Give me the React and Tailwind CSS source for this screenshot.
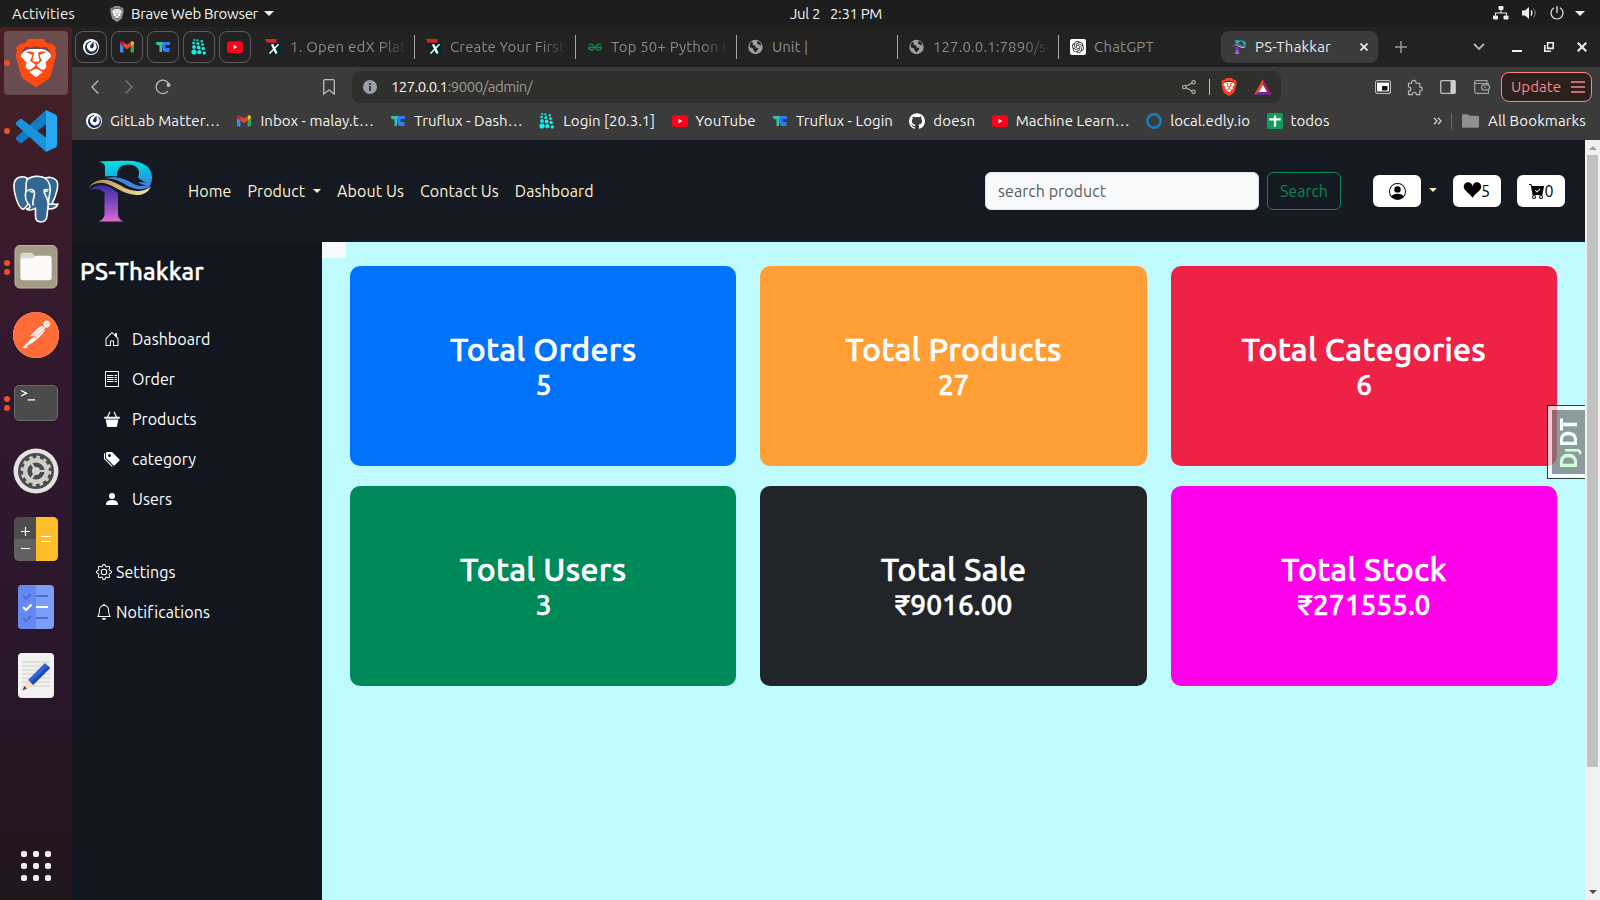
import React, { useLayoutEffect, useRef } from "react";
import {
  BsHouseDoor, BsTagsFill, BsPersonFill, BsGear, BsBell,
  BsPersonCircle, BsSuitHeartFill, BsCartCheckFill,
} from "react-icons/bs";
import { SiBrave, SiPostman, SiMattermost, SiGithub, SiOpenai } from "react-icons/si";

/* Text set to a given advance width by adjusting its letter spacing. */
function T({ w, className = "", children }) {
  const ref = useRef(null);
  useLayoutEffect(() => {
    const el = ref.current;
    el.style.letterSpacing = "0px";
    el.style.width = "auto";
    const natural = el.getBoundingClientRect().width;
    el.style.letterSpacing = (w - natural) / el.textContent.length + "px";
    el.style.width = w + "px";
  }, [w]);
  return (
    <span ref={ref} className={"inline-block shrink-0 whitespace-pre " + className}>
      {children}
    </span>
  );
}

/* ---------- favicons ---------- */
const Mattermost = () => (
  <span className="flex size-4 shrink-0 items-center justify-center rounded-full bg-white">
    <SiMattermost className="size-[13px] text-[#1b2f55]" />
  </span>
);
const Gmail = () => (
  <svg viewBox="0 0 16 16" className="size-4 shrink-0">
    <path d="M1 4v8.500c0 .6.4 1 1 1h2.400V7z" fill="#4285f4" />
    <path d="M15 4v8.500c0 .6-.4 1-1 1h-2.400V7z" fill="#34a853" />
    <path d="M11.600 3.300V7.500L15 5V4c0-1.500-1.700-2.300-2.900-1.400z" fill="#fbbc04" />
    <path d="M4.400 3.300V7.500L1 5V4c0-1.500 1.700-2.300 2.900-1.400z" fill="#c5221f" />
    <path d="M4.400 3v4.600L8 10.300l3.600-2.700V3L8 5.700z" fill="#ea4335" />
  </svg>
);
const Truflux = () => (
  <svg viewBox="0 0 16 16" className="size-4 shrink-0">
    <path d="M1 3h7v3H7v7H4.500V6.200H2.500C1.500 6.200 1 5 1 3z" fill="#36c3a4" />
    <path d="M7.800 3H15v3h-3.300c-.9 0-1.200.6-1.200 1.500s.4 1.600 1.300 1.600H14.500V13h-3.500c-2.500 0-3.700-1-3.700-3.400V6z" fill="#2f7df6" />
  </svg>
);
const Dots = () => (
  <svg viewBox="0 0 16 16" className="size-4 shrink-0" fill="#0ff0e6">
    <circle cx="3" cy="13" r="2.600" /><circle cx="8.300" cy="13.200" r="2.100" /><circle cx="13.300" cy="14" r="1.700" />
    <circle cx="3" cy="8" r="1.900" /><circle cx="7.700" cy="8.500" r="1.900" /><circle cx="12.200" cy="9.500" r="1.700" />
    <circle cx="2.500" cy="4" r="1.300" /><circle cx="6.800" cy="4.600" r="1.500" /><circle cx="11.500" cy="5.600" r="1.400" />
    <circle cx="3.300" cy="1" r="1" /><circle cx="6.300" cy="1.300" r="1.100" /><circle cx="10.800" cy="2.300" r="1.200" />
  </svg>
);
const YouTube = () => (
  <svg viewBox="0 0 16 16" className="size-4 shrink-0">
    <rect x="0" y="2.300" width="16" height="11.600" rx="2.600" fill="#ff0016" />
    <path d="M6.500 5.800v4.600L10.300 8.100z" fill="#fff" />
  </svg>
);
const EdX = () => (
  <svg viewBox="0 0 16 16" className="size-4 shrink-0">
    <path d="M4 2.500h11.500V15.500H4z" fill="#002b2b" />
    <path d="M0 0h11.500v3.800H1.800z" fill="#d8232a" />
    <path d="M7 5.300l4.500 9.200" stroke="#fff" strokeWidth="2.400" /><path d="M13.500 5.300L4.500 14.500" stroke="#fff" strokeWidth="1.500" />
  </svg>
);
const Gfg = () => (
  <svg viewBox="0 0 16 16" className="size-4 shrink-0" fill="none" stroke="#12803f" strokeWidth="1.400">
    <path d="M1 8.300h14M2 5.700C3.500 4.500 7 5 7 8.300c0 3.600-4.800 3.600-5.500 0M14 5.700C12.500 4.500 9 5 9 8.300c0 3.600 4.800 3.600 5.500 0" />
  </svg>
);
const Globe = () => (
  <svg viewBox="0 0 16 16" className="size-4 shrink-0">
    <circle cx="7.500" cy="8" r="7.200" fill="#9aa0a6" />
    <path d="M3 2.900C4.500 3 5.200 4 4.800 5c-.4.900.5 1.300 1.500 1.300s1.300.700 1.200 1.600c0 .8 1 .8 2 .8 1.200 0 1 1.500 0 2.200-.8.600-.9 1.700-2 2.500-.7-1.300-2.200-1.500-2.200-2.900S3.700 8.800 2 8.600c-.7-2 0-4.300 1-5.700zM8.500 1.800c1.300.5 1.200 1.500.6 2.300-.5.700.6 1.500 1.800 1.500.8 0 1 .9 2.200.8.600-1.800-1.600-4.300-4.600-4.600z" fill="#242424" />
  </svg>
);
const ChatGPT = () => (
  <span className="flex size-4 shrink-0 items-center justify-center rounded-[2px] bg-white">
    <SiOpenai className="size-[12px] text-[#222]" />
  </span>
);
const Ring = () => (
  <svg viewBox="0 0 16 16" className="size-4 shrink-0"><circle cx="8" cy="8" r="6.700" fill="none" stroke="#0b82c4" strokeWidth="2.500" /></svg>
);
const Sheet = () => (
  <svg viewBox="0 0 16 16" className="size-4 shrink-0">
    <rect width="16" height="16" rx="1.500" fill="#0f9d58" />
    <path d="M2.300 6.300h11.400M8 2.500v11.300" stroke="#fff" strokeWidth="2.200" />
  </svg>
);

function Logo({ className, id }) {
  return (
    <svg viewBox="0 0 64 62" className={className}>
      <defs>
        <linearGradient id={id + "a"} x1="0" y1="0" x2="0.150" y2="1">
          <stop offset="0" stopColor="#08e6dc" /><stop offset=".5" stopColor="#0bbbe0" /><stop offset="1" stopColor="#4280dc" />
        </linearGradient>
        <linearGradient id={id + "b"} x1="0" y1="0" x2="0" y2="1">
          <stop offset="0" stopColor="#3a2fa0" /><stop offset=".5" stopColor="#8348bd" /><stop offset="1" stopColor="#dc6ad0" />
        </linearGradient>
        <linearGradient id={id + "c"} x1="0" y1="0" x2="1" y2="0">
          <stop offset="0" stopColor="#a5834d" /><stop offset=".5" stopColor="#d8b878" /><stop offset="1" stopColor="#f6e8a0" />
        </linearGradient>
      </defs>
      <path d="M11 1.500C20 1.500 29 .8 40 .8 55 .8 64 7 64 17.500c0 4-1 7-3 9.500-3 .8-7 .5-10-1l8-.5c-4-.4-6.500-1.500-9-3.500l9 .5c-4-1-6.500-2.500-9-5 3-6 0-13-10-13-7.500 0-11 4-11 12-4-.8-8-.8-12 0V7c0-3-2.500-4.500-6-5.500z" fill={`url(#${id}a)`} />
      <path d="M17 18.200c12-2.500 20 .8 27 4.800 6 3.200 12 4.700 18 3.500-6 4.500-17 3-24-1.500-6-4-12-6.500-21-6.800z" fill="#3c86e0" />
      <path d="M0 28.500c4-7 13-11 23-7.500 10 3.500 15 9.500 26 10 5.500 0 10-1.500 14-4.500-3 6-8 9-15 8.500C34 34 27 25.500 16 23 9.500 21.800 4 24 0 28.500z" fill={`url(#${id}c)`} />
      <path d="M2 30c5-5.500 14-6 20-2.500 3 1.500 5 3.500 8 5.500V54c0 3.500 2 6 5.500 7.500h-25C14 60 16.500 57.500 16.500 54V32.500C12 28.500 7 28.200 2 30z" fill={`url(#${id}b)`} />
    </svg>
  );
}

/* ---------- dock ---------- */
function BraveIcon({ className, back, face = "bg-white" }) {
  return (
    <span className={"relative flex items-center justify-center " + className}>
      <span className={"absolute h-[60%] w-[66%] rounded-[35%] " + face} />
      <SiBrave className={"relative size-full " + back} preserveAspectRatio="none" />
    </span>
  );
}

const VsCode = () => (
  <svg viewBox="0 0 42 42" className="size-[42px]">
    <path d="M31 0L1.500 27c-1 1-1 2 0 3l3 2.600c.8.700 1.700.700 2.500.1L34 12z" fill="#0f7cc4" />
    <path d="M31 42L1.500 15c-1-1-1-2 0-3l3-2.600c.8-.7 1.700-.7 2.500-.1L34 30z" fill="#1a93dc" />
    <path d="M31 0l9.500 4.500C41.500 5 42 6 42 7v28c0 1-.5 2-1.500 2.500L31 42z" fill="#27a7f0" />
  </svg>
);
const Postgres = () => (
  <svg viewBox="0 0 46 48" className="h-[48px] w-[46px]" stroke="#fff" strokeWidth="1.600" strokeLinejoin="round" strokeLinecap="round" fill="#336791">
    <path d="M31 4c4-3 10-1.500 12.500 1.500 3 4-.5 16-4.500 23 1.500 1 4 1 6 .5-1 3-5 5-9.500 5z" />
    <path d="M14 3C9 .5 3 2 1.500 7-.5 14 4 29 8 33c2 2.500 4 .5 6-2.500l3-4z" />
    <path d="M14 5C18 .5 27 .5 32 3c5 4 6 11 4.500 17-.8 4-1 7-1.500 11l-1 10c-.5 4-3 6-6 6-4 0-5.500-2-5.500-6V33c-3 2.500-8 2.500-9 1 4-.5 4-3 2.500-4.500C12 26 12 20 13 15c.3-4-.5-7 1-10z" />
    <path d="M14 16c3-2.500 7-2 7.500 2 .3 4-2.500 7-1.500 12M35 15c-2-1-4-.5-4 1.500s3 5 3.500 9c.3 2 1 4 4 4" fill="none" />
    <path d="M17.500 16.500l2 .5M32 16.500l2-.3" />
  </svg>
);
const Files = () => (
  <svg viewBox="0 0 44 45" className="h-[44px] w-[44px]">
    <rect x=".5" y=".5" width="43" height="43.500" rx="5" fill="#a39c86" stroke="#bdb7a4" />
    <path d="M6 12V10.500C6 9 7 8 8.500 8H18l3 3.500h14V20H6z" fill="#ded9cd" />
    <path d="M6 15.500C6 14 7 13.500 8.500 13.500H19l3-2.500h13.500c1.500 0 2.500 1 2.500 2.500v20c0 1.500-1 2.500-2.500 2.500h-27C7 36 6 35 6 33.500z" fill="#fbfaf8" />
  </svg>
);
const Terminal = () => (
  <span className="h-9 w-11 rounded-[5px] border border-[#6a6a6a] bg-[#4b4b4b] pt-[3px] pl-[5px] shadow">
    <svg viewBox="0 0 16 12" className="h-3 w-4" fill="none" stroke="#fff" strokeWidth="1.300">
      <path d="M1 1.500l5.500 2.700L1 7M7.500 10.800H15" />
    </svg>
  </span>
);
function Settings() {
  return (
    <svg viewBox="0 0 46 46" className="size-[46px]">
      <circle cx="23" cy="23" r="22.500" fill="#e3e3e1" /><circle cx="23" cy="23" r="18" fill="#4b4b4b" />
      <circle cx="23" cy="23" r="14" fill="none" stroke="#cfcfcd" strokeWidth="2.800" strokeDasharray="3.500 3.830" />
      <circle cx="23" cy="23" r="10.800" fill="none" stroke="#cfcfcd" strokeWidth="4.400" />
      <circle cx="23" cy="23" r="4" fill="#d6d6d4" />
      <path d="M23 23h10M23 23l-5.500 9M23 23l-5.500-9" stroke="#cfcfcd" strokeWidth="2.200" />
    </svg>
  );
}
const Calculator = () => (
  <svg viewBox="0 0 44 44" className="size-11">
    <path d="M5 0h17v22H0V5c0-3 2-5 5-5z" fill="#4d4d4d" />
    <path d="M0 22h22v22H5c-3 0-5-2-5-5z" fill="#616161" />
    <path d="M22 0h17c3 0 5 2 5 5v34c0 3-2 5-5 5H22z" fill="#fdbe2a" />
    <path d="M7 14.500h9M11.500 10v9M7 31.500h9M27 19.500h10M27 24.500h10" stroke="#fff" strokeWidth="1.200" />
  </svg>
);
const Todo = () => (
  <svg viewBox="0 0 36 44" className="h-11 w-9" fill="none">
    <rect width="36" height="44" rx="4" fill="#7c9ef8" /><path d="M4 0h14v44H4c-2.500 0-4-1.500-4-4V4c0-2.500 1.500-4 4-4z" fill="#6489f2" />
    <path d="M5 11l3 3 5-5M5 33l3 3 5-5M18 11h12M18 33h12" stroke="#4c70d2" strokeWidth="1.800" />
    <path d="M5 22l3 3 5.500-5.500M18 22h12" stroke="#fff" strokeWidth="2.200" />
  </svg>
);
const Editor = () => (
  <svg viewBox="0 0 36 45" className="h-[45px] w-9">
    <rect width="36" height="45" rx="4" fill="#f1f1f0" />
    <path d="M4 9h28M4 13h28M4 17h28M4 21h28M4 25h28M4 29h28M4 33h28" stroke="#cfcfcf" />
    <path d="M27 10l5 5-17 17-5-5z" fill="#2f63dc" /><path d="M30 13l2 2-17 17-2.500-2.500z" fill="#1f49b4" />
    <path d="M10 27l5 5-6 3.500-3-2.500z" fill="#fbdcb8" /><path d="M6.300 33l2.700 2.400L4.500 37.500z" fill="#444" />
  </svg>
);

const dock = [
  { dots: 1, active: true, el: <BraveIcon className="h-12 w-[48px]" back="text-[#ff4a12]" /> },
  { dots: 1, el: <VsCode /> },
  { dots: 0, el: <Postgres /> },
  { dots: 2, el: <Files /> },
  { dots: 0, el: <span className="flex size-[46px] items-center justify-center rounded-full bg-white"><SiPostman className="size-[46px] text-[#ff6c37]" /></span> },
  { dots: 2, el: <Terminal /> },
  { dots: 0, el: <Settings /> },
  { dots: 0, el: <Calculator /> },
  { dots: 0, el: <Todo /> },
  { dots: 0, el: <Editor /> },
];

function Dock() {
  return (
    <aside className="flex w-[72px] shrink-0 flex-col bg-[linear-gradient(180deg,#482022_0%,#401e27_12%,#371a2d_27%,#30182e_45%,#28162a_75%,#22161d_100%)] pt-[2px]">
      {dock.map((d, i) => (
        <div key={i} className="relative flex h-[68px] items-center justify-center">
          <div className="absolute left-1 flex flex-col gap-[3px]">
            {Array.from({ length: d.dots }, (_, k) => <i key={k} className="size-[6px] rounded-full bg-[#e95420]" />)}
          </div>
          <div className={"flex size-16 items-center justify-center rounded-[4px] " + (d.active ? "bg-white/20" : "")}>{d.el}</div>
        </div>
      ))}
      <div className="mt-auto mb-[19px] ml-[21px] grid w-[30px] grid-cols-3 gap-[6px]">
        {Array.from({ length: 9 }, (_, k) => <i key={k} className="size-[6px] rounded-[2px] bg-[#f0efed]" />)}
      </div>
    </aside>
  );
}

/* ---------- browser chrome ---------- */
function TopBar() {
  return (
    <header className="grid h-[27px] shrink-0 grid-cols-[790px_92px_1fr] items-center bg-[#1d1d1d] text-[15px] leading-none text-[#f2f2f2]">
      <div className="flex items-center pl-3">
        <T w={63}>Activities</T>
        <BraveIcon className="ml-[34px] size-4" back="text-[#8e8e8e]" />
        <T w={127} className="ml-[6px]">Brave Web Browser</T>
        <svg viewBox="0 0 10 5" className="ml-[6px] h-[5px] w-[10px]" fill="#eee"><path d="M0 0h10L5 5z" /></svg>
      </div>
      <div className="flex justify-between pb-px"><T w={30}>Jul 2</T><T w={52}>2:31 PM</T></div>
      <div className="flex items-center justify-end pr-[15px] pb-px">
        <svg viewBox="0 0 16 14" className="h-[14px] w-4" fill="#eee">
          <rect x="5.500" y="0" width="5" height="4" rx="1" /><rect x="0" y="9.500" width="5" height="4" rx="1" /><rect x="10.500" y="9.500" width="5" height="4" rx="1" />
          <path d="M7.500 4h1v2.500H14v3h-1v-2H3v2H2v-3h5.500z" />
        </svg>
        <svg viewBox="0 0 15 14" className="ml-[13px] h-[14px] w-[15px]" fill="none" stroke="#eee">
          <path d="M0 4.500h3L7 1v12L3 9.500H0z" fill="#eee" stroke="none" /><path d="M9 4.500q1.800 2.500 0 5" strokeWidth="1.300" /><path d="M11.500 2.500q3.500 4.500 0 9" stroke="#888" />
        </svg>
        <svg viewBox="0 0 14 14" className="ml-[13px] size-[14px]" fill="none" stroke="#eee" strokeWidth="1.200">
          <path d="M4 1.800a6 6 0 1 0 6 0M7 0v7" />
        </svg>
        <svg viewBox="0 0 10 5" className="ml-[11px] h-[5px] w-[10px]" fill="#eee"><path d="M0 0h10L5 5z" /></svg>
      </div>
    </header>
  );
}

const tabs = [
  [EdX, "1. Open edX Platf", 122],
  [EdX, "Create Your First", 115],
  [Gfg, "Top 50+ Python In", 124],
  [Globe, "Unit |", 36],
  [Globe, "127.0.0.1:7890/sc", 120],
  [ChatGPT, "ChatGPT", 60],
];

function TabStrip() {
  return (
    <div className="flex h-10 shrink-0 items-center bg-[#222222] pl-[3px] text-[15px]">
      <div className="flex gap-1">
        {[Mattermost, Gmail, Truflux, Dots, YouTube].map((I, i) => (
          <div key={i} className="flex size-8 items-center justify-center rounded-lg border border-[#5c5c5c]"><I /></div>
        ))}
      </div>
      <div className="ml-[2px] flex">
        {tabs.map(([I, label, w], i) => (
          <div key={i} className={"flex h-6 w-[161px] items-center border-l pl-[11px] text-[#8c8c8c] " + (i ? "border-[#a6a6a6]" : "border-transparent")}>
            <I />
            <span className={"flex " + (w > 112 ? "bg-[linear-gradient(90deg,#8c8c8c_90px,transparent_118px)] bg-clip-text text-transparent " : "") + (i === 0 ? "ml-[9px]" : "ml-2")}>
              <T w={w}>{label}</T>
            </span>
          </div>
        ))}
      </div>
      <div className="ml-[2px] flex h-8 w-[157px] items-center rounded-lg bg-[#3b3b3b] pl-[11px] text-[#e8e8e8]">
        <Logo id="tab" className="h-[14px] w-[14px]" />
        <T w={76} className="ml-[9px]">PS-Thakkar</T>
        <svg viewBox="0 0 8 8" className="ml-[29px] size-2" stroke="#eee" strokeWidth="1.700"><path d="M.5.5l7 7M7.500.5l-7 7" /></svg>
      </div>
      <svg viewBox="0 0 12 12" className="ml-[17px] size-3" stroke="#989898" strokeWidth="1.500"><path d="M6 0v12M0 6h12" /></svg>
      <svg viewBox="0 0 12 8" className="ml-[66px] h-2 w-3" fill="none" stroke="#b5b5b5" strokeWidth="1.800"><path d="M1 1l5 5 5-5" /></svg>
      <svg viewBox="0 0 10 10" className="ml-[27px] size-[10px]" stroke="#eee" strokeWidth="2"><path d="M0 9h10" /></svg>
      <svg viewBox="0 0 10 10" className="ml-[22px] size-[10px]" fill="none" stroke="#eee" strokeWidth="1.600"><path d="M3.600.8h5.600v5.600H3.600zM.8 3v6.200H7" /></svg>
      <svg viewBox="0 0 10 10" className="ml-[23px] size-[10px]" stroke="#eee" strokeWidth="2"><path d="M.7.7l8.600 8.600M9.300.7L.7 9.300" /></svg>
    </div>
  );
}

function Toolbar() {
  return (
    <div className="flex h-10 shrink-0 items-center bg-[#3b3b3b] text-[15px]">
      <svg viewBox="0 0 8 14" className="ml-[19px] h-[14px] w-2" fill="none" stroke="#bdbdbd" strokeWidth="1.300"><path d="M7.300.5L1 7l6.300 6.500" /></svg>
      <svg viewBox="0 0 8 14" className="ml-[26px] h-[14px] w-2" fill="none" stroke="#777" strokeWidth="1.300"><path d="M.7.500L7 7 .7 13.500" /></svg>
      <svg viewBox="0 0 16 16" className="ml-[22px] size-4" fill="none" stroke="#bdbdbd" strokeWidth="1.300"><path d="M13 12.200A6.700 6.700 0 1 1 14.200 5.800" /><circle cx="13.500" cy="6" r="2" fill="#bdbdbd" stroke="none" /></svg>
      <svg viewBox="0 0 12 16" className="ml-[152px] h-4 w-3" fill="none" stroke="#bdbdbd" strokeWidth="1.300"><path d="M.7 15V2q0-1.300 1.300-1.300h8q1.300 0 1.300 1.300v13L6 11z" /></svg>
      <div className="ml-[17px] flex h-8 w-[929px] items-center rounded-lg bg-[#2f2f2b] pl-[11px]">
        <svg viewBox="0 0 14 14" className="size-[14px]"><circle cx="7" cy="7" r="7" fill="#9aa0a6" /><path d="M7 6v5M7 3v2" stroke="#2f2f2b" strokeWidth="1.700" /></svg>
        <T w={56.500} className="ml-[14px] text-[#f5f5f5]">127.0.0.1</T>
        <T w={84.500} className="text-[#9a9a98]">:9000/admin/</T>
        <svg viewBox="0 0 14 14" className="ml-auto size-[14px]" fill="none" stroke="#b5b5b5" strokeWidth="1.100">
          <circle cx="2.300" cy="7" r="1.700" /><circle cx="11.500" cy="2.300" r="1.700" /><circle cx="11.500" cy="11.700" r="1.700" /><path d="M4 6.200l6-3.100M4 7.800l6 3.100" />
        </svg>
        <span className="ml-[13px] h-4 w-px bg-[#c0c0c0]" />
        <BraveIcon className="ml-[10px] h-[18px] w-[18px]" back="text-[#fb4220]" />
        <svg viewBox="0 0 18 16" className="mr-[9px] ml-4 h-4 w-[18px]"><path d="M9 0L0 16l9-5z" fill="#ff4724" /><path d="M9 0l9 16-9-5z" fill="#9e1f63" /><path d="M0 16l9-5 9 5z" fill="#662d91" /><path d="M9 6l4 7H5z" fill="#fff" /></svg>
      </div>
      <svg viewBox="0 0 16 14" className="ml-[94px] h-[14px] w-4"><rect x=".6" y=".6" width="14.800" height="12.800" rx="2" fill="#111" stroke="#bdbdbd" strokeWidth="1.200" /><path d="M2 2.500h12v9H2z" fill="#fff" /><path d="M7 6h5.500v4.500H7z" fill="#111" /></svg>
      <svg viewBox="0 0 24 24" className="ml-[15px] size-[17px]" fill="none" stroke="#bdbdbd" strokeWidth="1.600" strokeLinejoin="round"><path d="M3.500 6H8c-1.500-5.500 7.500-5.500 6 0h5.500v5.500c4.500-1 4.500 6 0 5V22H14.500c.5-4.500-6-4.500-5.500 0H3.500v-5c4.500 0 4.500-6 0-6z" /></svg>
      <svg viewBox="0 0 16 14" className="ml-[17px] h-[14px] w-4"><rect x=".7" y=".7" width="14.600" height="12.600" rx="1" fill="none" stroke="#bdbdbd" strokeWidth="1.300" /><path d="M10.500.5H15v13h-4.500z" fill="#cfcfcf" /></svg>
      <svg viewBox="0 0 16 14" className="ml-[18px] h-[14px] w-4" fill="none" stroke="#a0a0a0" strokeWidth="1.200"><path d="M14.500 4.500V3.500H2.500Q.7 3.500.7 2T2.500.7H13v2.800M.7 2v9.500q0 1.800 1.800 1.800h12V10" /><rect x="7.500" y="4.800" width="8" height="5" rx="2.300" /><path d="M10 7.300h1.500" /></svg>
      <div className="ml-[11px] flex h-[30px] w-[91px] items-center rounded-lg border border-[#f98880] bg-[#2c201f] pl-[9px] text-[#f98880]">
        <T w={50}>Update</T>
        <svg viewBox="0 0 14 12" className="ml-[10px] h-3 w-[14px]" stroke="#f98880" strokeWidth="1.300"><path d="M0 1h14M0 6h14M0 11h14" /></svg>
      </div>
    </div>
  );
}

const GitHub = () => <SiGithub className="size-4 shrink-0 text-white" />;
const bookmarks = [
  [Mattermost, "GitLab Matter…", 110],
  [Gmail, "Inbox - malay.t…", 113.5],
  [Truflux, "Truflux - Dash…", 108.5],
  [Dots, "Login [20.3.1]", 92],
  [YouTube, "YouTube", 60],
  [Truflux, "Truflux - Login", 97],
  [GitHub, "doesn", 42],
  [YouTube, "Machine Learn…", 114],
  [Ring, "local.edly.io", 80],
  [Sheet, "todos", 39],
];

function Bookmarks() {
  return (
    <div className="flex h-[33px] shrink-0 items-center bg-[#3b3b3b] pb-[5px] pl-[14px] text-[15px] text-[#f4f4f4]">
      <div className="flex gap-[16.400px]">
        {bookmarks.map(([I, label, w], i) => (
          <div key={i} className="flex items-center gap-2"><I /><T w={w}>{label}</T></div>
        ))}
      </div>
      <svg viewBox="0 0 9 8" className="ml-auto h-2 w-[9px]" fill="none" stroke="#ccc" strokeWidth="1.300"><path d="M1 .7L4 4 1 7.300M5 .7L8 4 5 7.300" /></svg>
      <span className="ml-[9px] h-4 w-px bg-[#666]" />
      <svg viewBox="0 0 17 14" className="ml-[10px] h-[14px] w-[17px]"><path d="M0 1.500Q0 .3 1.200.3H6l1.500 1.500h8.300Q17 1.800 17 3v9.500q0 1.200-1.200 1.200H1.200Q0 13.700 0 12.500z" fill="#8e8e93" /></svg>
      <T w={98} className="mr-[14px] ml-[9px]">All Bookmarks</T>
    </div>
  );
}

/* ---------- page ---------- */
const Caret = ({ className = "" }) => (
  <svg viewBox="0 0 8 4" className={"h-1 w-2 " + className} fill="#ffefc8"><path d="M0 0h8L4 4z" /></svg>
);

function Navbar() {
  return (
    <nav className="flex h-[102px] shrink-0 items-center bg-[#151922] pl-4 text-[16px] leading-6 text-[#fdf0cf]">
      <Logo id="nav" className="h-[62px] w-16" />
      <div className="ml-9 flex items-center gap-4">
        <T w={43.500}>Home</T>
        <span className="flex items-center gap-[8px]"><T w={57.500}>Product</T><Caret /></span>
        <T w={67}>About Us</T>
        <T w={78.800}>Contact Us</T>
        <T w={78.800}>Dashboard</T>
      </div>
      <div className="ml-auto flex h-[38px] w-[274px] items-center rounded-md border border-[#dee2e6] bg-[#f8f9fa] pl-3 text-[#595c5f]"><T w={108}>search product</T></div>
      <button className="ml-2 flex h-[38px] w-[74px] items-center justify-center rounded-md border border-[#0c8556] text-[#0c8556]"><T w={48}>Search</T></button>
      <div className="ml-8 flex h-8 w-12 items-center justify-center rounded-md bg-white text-black"><BsPersonCircle className="size-[17px]" /></div>
      <Caret className="mb-[2px] ml-2" />
      <div className="ml-4 flex h-8 w-12 items-center justify-center rounded-md bg-white text-black"><BsSuitHeartFill className="h-4 w-[17px] -translate-y-px scale-110" /><T w={9}>5</T></div>
      <div className="mr-5 ml-4 flex h-8 w-12 items-center justify-center rounded-md bg-white text-black"><BsCartCheckFill className="size-4" /><T w={9}>0</T></div>
    </nav>
  );
}

const OrderIcon = ({ className }) => (
  <svg viewBox="0 0 16 16" className={className} fill="none" stroke="#fff">
    <path d="M1.500.5h13v15h-13z" />
    <path d="M3 4.500h6.500M3 6.500h6.500M3 8.500h6.500M3 10.500h6.500M10.500 4.500h2.500M10.500 6.500h2.500M10.500 8.500h2.500M10.500 10.500h2.500" strokeWidth="1.150" />
  </svg>
);
const Basket = ({ className }) => (
  <svg viewBox="0 0 16 16" className={className} fill="#fff">
    <path d="M5.700 1.200L3.600 6M10.300 1.200L12.400 6" stroke="#fff" strokeWidth="1.200" strokeLinecap="round" />
    <path d="M.3 5.700h15.400v2.100H.3zM1.700 8.600h12.600l-1.200 6.400q-.2.900-1 .9H3.900q-.8 0-1-.9z" />
  </svg>
);
const menu = [
  [BsHouseDoor, "Dashboard", 78.5],
  [OrderIcon, "Order", 43],
  [Basket, "Products", 64.5],
  [BsTagsFill, "category", 64],
  [BsPersonFill, "Users", 40],
];

function Sidebar() {
  return (
    <aside className="flex w-[250px] shrink-0 flex-col bg-[#12161e] px-2 text-[16px] text-white">
      <div className="h-[77px] pt-[15px] text-[24px] leading-[30px] font-medium [-webkit-text-stroke:0.4px_currentColor]"><T w={124}>PS-Thakkar</T></div>
      {menu.map(([I, label, w]) => (
        <div key={label} className="flex h-10 items-center gap-3 pl-6"><I className="size-4" /><T w={w}>{label}</T></div>
      ))}
      <hr className="mt-4 mb-4 border-[#161a22]" />
      <div className="flex h-10 items-center gap-1 pl-4"><BsGear className="size-4" /><T w={59.500}>Settings</T></div>
      <div className="flex h-10 items-center gap-1 pl-4"><BsBell className="size-4" /><T w={93.500}>Notifications</T></div>
    </aside>
  );
}

const cards = [
  ["Total Orders", 186.5, "5", 15, "bg-[#0073fa]"],
  ["Total Products", 216.5, "27", 31, "bg-[#ff9f36]"],
  ["Total Categories", 244.5, "6", 15, "bg-[#ee2246]"],
  ["Total Users", 166.5, "3", 15, "bg-[#008959]"],
  ["Total Sale", 145.5, "₹9016.00", 118, "bg-[#212529]"],
  ["Total Stock", 165.5, "₹271555.0", 133, "bg-[#ff00ea]"],
];

function Main() {
  return (
    <main className="relative flex grow bg-[#bffaff]">
      <div className="h-4 w-6 shrink-0 bg-[#f8f9fa]" />
      <div className="mt-6 mr-7 ml-1 grid grow auto-rows-[200px] grid-cols-3 content-start gap-x-6 gap-y-5">
        {cards.map(([title, tw, value, vw, bg]) => (
          <div key={title} className={"flex flex-col items-center justify-center rounded-[10px] font-medium text-white [-webkit-text-stroke:0.55px_currentColor] " + bg}>
            <T w={tw} className="text-[32px] leading-[38px]">{title}</T>
            <T w={vw} className="text-[28px] leading-[34px]">{value}</T>
          </div>
        ))}
      </div>
      <div className="absolute top-[163px] right-0 h-[74px] w-[38px] border border-r-0 border-black bg-white py-1 pl-1 opacity-75">
        <div className="flex h-full items-center justify-center bg-[#7b7d7d] pl-px">
          <div className="flex translate-y-px rotate-180 items-center font-['Noto_Sans'] text-[22.500px] leading-none font-bold text-white [writing-mode:vertical-rl]">
            <span className="text-[#d9ffd0]">D</span><span className="self-end pr-px text-[17px] leading-[19px] text-[#d9ffd0]">J</span><span>DT</span>
          </div>
        </div>
      </div>
    </main>
  );
}

function Scrollbar() {
  return (
    <div className="flex w-[15px] shrink-0 flex-col items-center bg-[#f1f1f1]">
      <svg viewBox="0 0 8 4" className="mt-[6px] h-1 w-2" fill="#a3a3a3"><path d="M0 4h8L4 0z" /></svg>
      <div className="mt-[5px] h-[612px] w-[11px] bg-[#c1c1c1]" />
      <svg viewBox="0 0 8 4" className="mt-auto mb-[6px] h-1 w-2" fill="#505050"><path d="M0 0h8L4 4z" /></svg>
    </div>
  );
}

export default function App() {
  return (
    <div className="flex h-[900px] w-[1600px] flex-col overflow-hidden font-['Ubuntu','Noto_Sans',sans-serif]">
      <TopBar />
      <div className="flex min-h-0 grow">
        <Dock />
        <div className="flex min-w-0 grow flex-col">
          <TabStrip />
          <Toolbar />
          <Bookmarks />
          <div className="flex min-h-0 grow">
            <div className="flex min-w-0 grow flex-col">
              <Navbar />
              <div className="flex min-h-0 grow"><Sidebar /><Main /></div>
            </div>
            <Scrollbar />
          </div>
        </div>
      </div>
    </div>
  );
}
